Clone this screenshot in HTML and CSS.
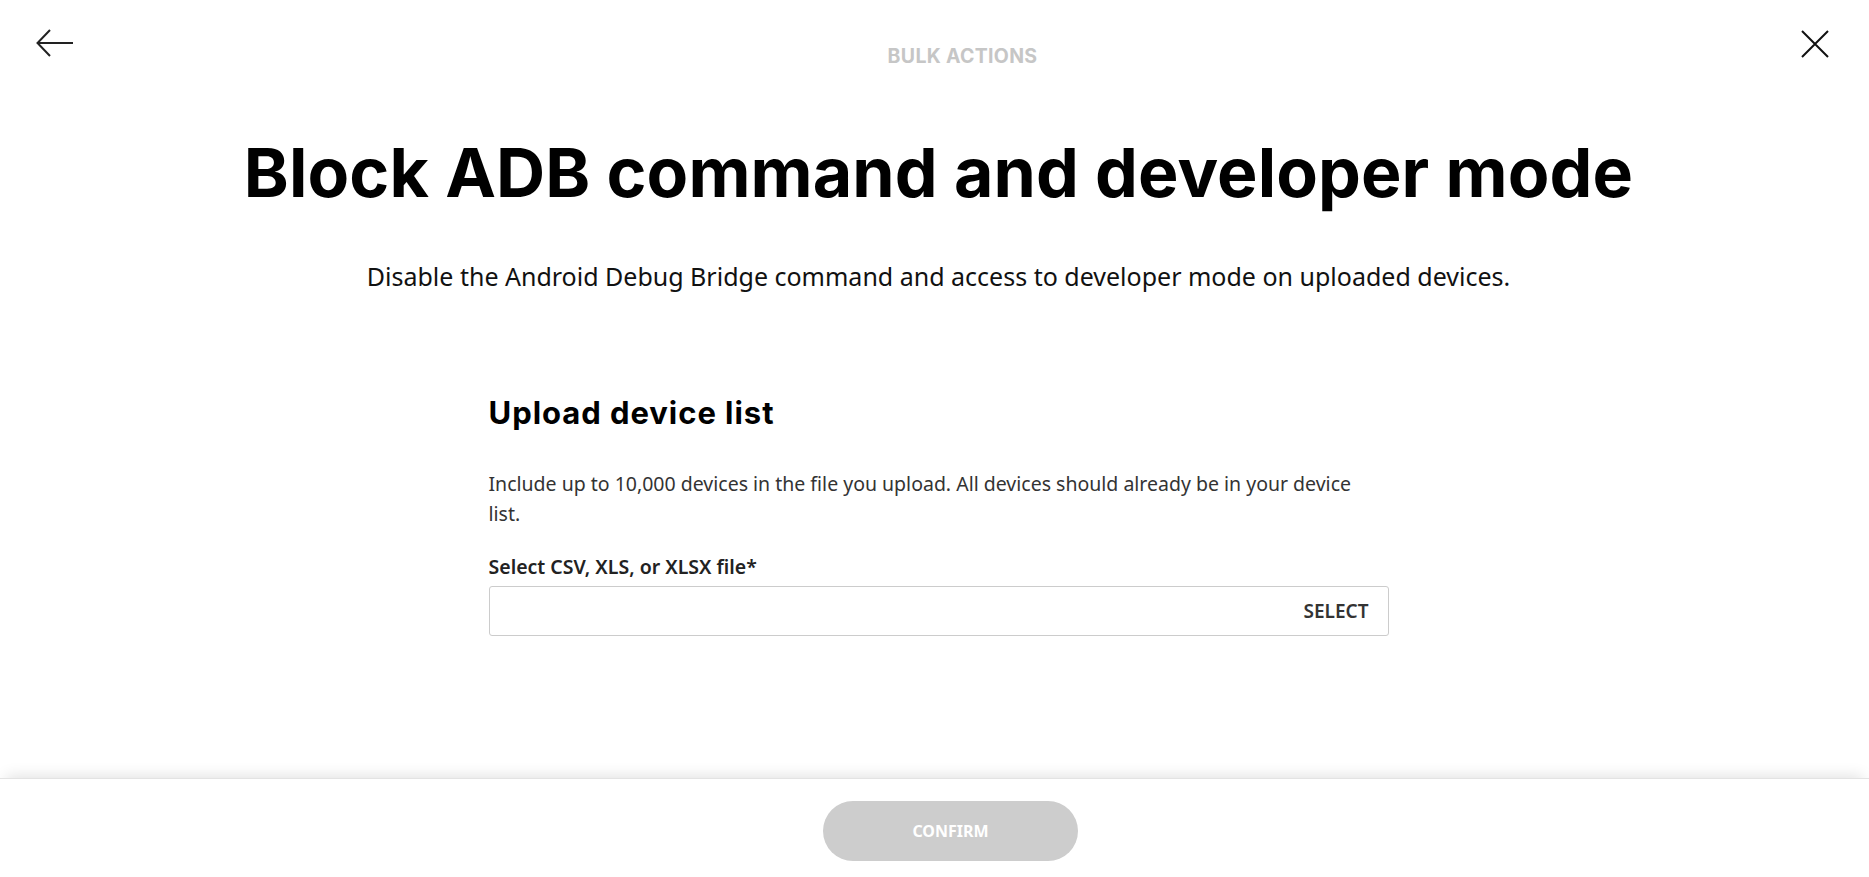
FILE: index.html
```html
<!DOCTYPE html>
<html lang="en">
<head>
<meta charset="utf-8">
<title>Bulk actions</title>
<link rel="stylesheet" href="styles.css">
</head>
<body>
<div class="page">
  <header class="topbar">
    <button class="icon-btn back" aria-label="Back">
      <svg width="38" height="28" viewBox="0 0 38 28"><path d="M37 14H2M14 1L1.5 14L14 27" fill="none" stroke="#222" stroke-width="2"/></svg>
    </button>
    <div class="eyebrow">BULK ACTIONS</div>
    <button class="icon-btn close" aria-label="Close">
      <svg width="28" height="28" viewBox="0 0 28 28"><path d="M1 1L27 27M27 1L1 27" fill="none" stroke="#111" stroke-width="2"/></svg>
    </button>
  </header>
  <main class="content">
    <h1 class="title">Block ADB command and developer mode</h1>
    <p class="subtitle">Disable the Android Debug Bridge command and access to developer mode on uploaded devices.</p>
    <section class="card">
      <h2 class="card-title">Upload device list</h2>
      <p class="card-text">Include up to 10,000 devices in the file you upload. All devices should already be in your device list.</p>
      <label class="field-label">Select CSV, XLS, or XLSX file*</label>
      <div class="file-input">
        <span class="select-btn">SELECT</span>
      </div>
    </section>
  </main>
  <footer class="footer">
    <button class="confirm" disabled>CONFIRM</button>
  </footer>
</div>
</body>
</html>
```
FILE: styles.css
```css
* { box-sizing: border-box; }
html, body { margin: 0; padding: 0; background: #fff; }
body { font-family: "Noto Sans", sans-serif; color: #000; }
.page { height: 877px; display: flex; flex-direction: column; overflow: hidden; }
.topbar { display: grid; grid-template-columns: 1fr auto 1fr; align-items: start; padding: 29px 40px 0 36px; height: 100px; }
.icon-btn { background: none; border: 0; padding: 0; cursor: pointer; display: block; line-height: 0; }
.back { justify-self: start; }
.close { margin-top: 1px; justify-self: end; }
.eyebrow { font-family: "Inter", sans-serif; font-weight: 700; font-size: 19.5px; letter-spacing: 0.3px; color: #c6c6c6; margin-top: 15px; padding-left: 60px; }
.content { flex: 1; display: flex; flex-direction: column; align-items: center; padding-left: 8px; }
.title { font-family: "Inter", sans-serif; font-weight: 700; font-size: 68px; letter-spacing: 0.1px; margin: 32px 0 0; line-height: 1.2; }
.subtitle { font-family: "Noto Sans", sans-serif; font-size: 25px; margin: 45px 0 0; color: #111; }
.card { width: 900px; margin-top: 101px; }
.card-title { font-family: "Inter", sans-serif; font-weight: 700; font-size: 31px; letter-spacing: 0.95px; margin: 0; line-height: 1.2; }
.card-text { font-size: 19.5px; line-height: 30px; color: #333; margin: 38px 0 0; max-width: 880px; }
.field-label { display: block; font-size: 19.5px; font-weight: 600; color: #222; margin-top: 24px; }
.file-input { margin-top: 6px; height: 50px; border: 1px solid #ccc; border-radius: 3px; display: flex; align-items: center; justify-content: flex-end; padding-right: 19px; }
.select-btn { font-size: 19px; font-weight: 600; color: #333; }
.footer { height: 99px; box-shadow: 0 -8px 14px -6px rgba(0,0,0,0.12); border-top: 1px solid #e3e3e3; display: flex; justify-content: center; padding-top: 22px; padding-left: 32px; }
.confirm { width: 255px; height: 60px; border-radius: 30px; border: 0; background: #cdcdcd; color: #fff; font-family: "Noto Sans", sans-serif; font-weight: 700; font-size: 16px; }
```
